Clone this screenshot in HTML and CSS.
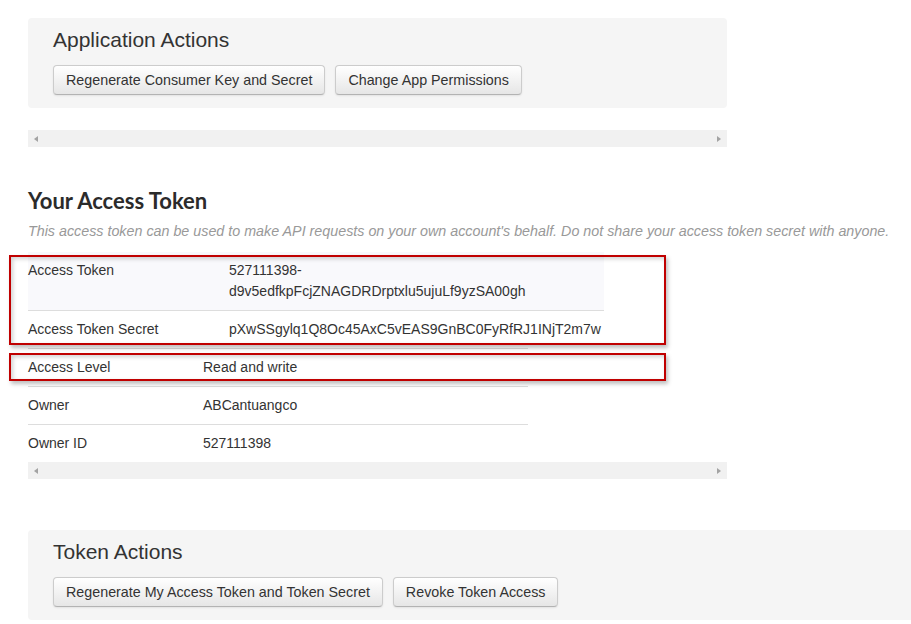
FILE: index.html
```html
<!DOCTYPE html>
<html lang="en">
<head>
<meta charset="utf-8">
<title>Your Access Token</title>
<link rel="stylesheet" href="styles.css">
</head>
<body>
<div class="page">
  <section class="panel panel-app">
    <h3 class="panel-title">Application Actions</h3>
    <div class="btn-row">
      <button class="btn">Regenerate Consumer Key and Secret</button>
      <button class="btn">Change App Permissions</button>
    </div>
  </section>
  <div class="hscroll"><span class="arrow arrow-left"></span><span class="arrow arrow-right"></span></div>

  <section class="token">
    <h2 class="token-title">Your Access Token</h2>
    <p class="lead">This access token can be used to make API requests on your own account's behalf. Do not share your access token secret with anyone.</p>
    <div class="tables">
      <table class="details details-token">
        <tr class="striped"><td class="label">Access Token</td><td class="value">527111398-d9v5edfkpFcjZNAGDRDrptxlu5ujuLf9yzSA00gh</td></tr>
        <tr><td class="label">Access Token Secret</td><td class="value">pXwSSgylq1Q8Oc45AxC5vEAS9GnBC0FyRfRJ1INjT2m7w</td></tr>
      </table>
      <table class="details details-owner">
        <tr><td class="label">Access Level</td><td class="value">Read and write</td></tr>
        <tr><td class="label">Owner</td><td class="value">ABCantuangco</td></tr>
        <tr><td class="label">Owner ID</td><td class="value">527111398</td></tr>
      </table>
      <div class="mark mark-token"></div>
      <div class="mark mark-level"></div>
    </div>
    <div class="hscroll"><span class="arrow arrow-left"></span><span class="arrow arrow-right"></span></div>
  </section>

  <section class="panel panel-token">
    <h3 class="panel-title">Token Actions</h3>
    <div class="btn-row">
      <button class="btn">Regenerate My Access Token and Token Secret</button>
      <button class="btn">Revoke Token Access</button>
    </div>
  </section>
</div>
</body>
</html>
```
FILE: styles.css
```css
html, body {
  margin: 0;
  padding: 0;
  background: #fff;
}
body {
  font-family: "Liberation Sans", Arial, sans-serif;
  font-size: 14.3px;
  color: #333;
  overflow: hidden;
}
.page {
  padding: 18px 0 0 28px;
  width: 883px;
  overflow: hidden;
}
.panel {
  background: #f5f5f5;
  border-radius: 4px;
  padding: 10px 25px 13px;
  box-sizing: border-box;
}
.panel-app {
  width: 699px;
  height: 90px;
}
.panel-token {
  width: 900px;
  height: 90px;
  margin-top: 51px;
}
.panel-title {
  margin: 0 0 13px;
  font-size: 21px;
  line-height: 24px;
  font-weight: normal;
  color: #333;
}
.btn-row {
  display: flex;
  gap: 10px;
}
.btn {
  font-family: "Liberation Sans", Arial, sans-serif;
  font-size: 14.3px;
  line-height: 20px;
  color: #333;
  padding: 4px 12px;
  height: 30px;
  box-sizing: border-box;
  border: 1px solid #ccc;
  border-bottom-color: #b3b3b3;
  border-radius: 4px;
  background: linear-gradient(#ffffff, #e6e6e6);
  box-shadow: inset 0 1px 0 rgba(255,255,255,.2), 0 1px 2px rgba(0,0,0,.08);
}
.hscroll {
  width: 699px;
  height: 17px;
  background: #f1f1f1;
  margin-top: 22px;
  display: flex;
  justify-content: space-between;
  align-items: center;
  padding: 0 6px;
  box-sizing: border-box;
}
.token .hscroll {
  margin-top: 0;
}
.arrow {
  width: 0;
  height: 0;
  border-top: 3.5px solid transparent;
  border-bottom: 3.5px solid transparent;
}
.arrow-left {
  border-right: 4px solid #a3a3a3;
}
.arrow-right {
  border-left: 4px solid #a3a3a3;
}
.token-title {
  margin: 41px 0 7px;
  font-family: Lato, "Liberation Sans", sans-serif;
  font-weight: 700;
  font-size: 22px;
  line-height: 26px;
  color: #2b2b2b;
}
.lead {
  margin: 0 0 10px;
  font-style: italic;
  color: #999;
  line-height: 20px;
  white-space: nowrap;
}
.tables {
  position: relative;
}
.details {
  border-collapse: collapse;
  table-layout: fixed;
}
.details td {
  border-top: 1px solid #ddd;
  padding: 8px 3px 8px 0;
  font-size: 14px;
  line-height: 21px;
  vertical-align: top;
  color: #333;
}
.details-token tr:first-child td {
  border-top-color: transparent;
}
.details-token {
  width: 576px;
}
.details-token .label {
  width: 198px;
}
.details-token .value {
  padding-right: 15px;
}
.details-owner {
  width: 500px;
}
.details-owner .label {
  width: 172px;
}
.striped td {
  background: #f9f9fc;
}
.mark {
  position: absolute;
  left: -19px;
  width: 653px;
  border: 2px solid #c00000;
  box-shadow: 2px 3px 4px rgba(0,0,0,.25), inset 2px 2px 4px rgba(0,0,0,.18);
  pointer-events: none;
}
.mark-token {
  top: 4px;
  height: 86px;
}
.mark-level {
  top: 102px;
  height: 24px;
}
```
